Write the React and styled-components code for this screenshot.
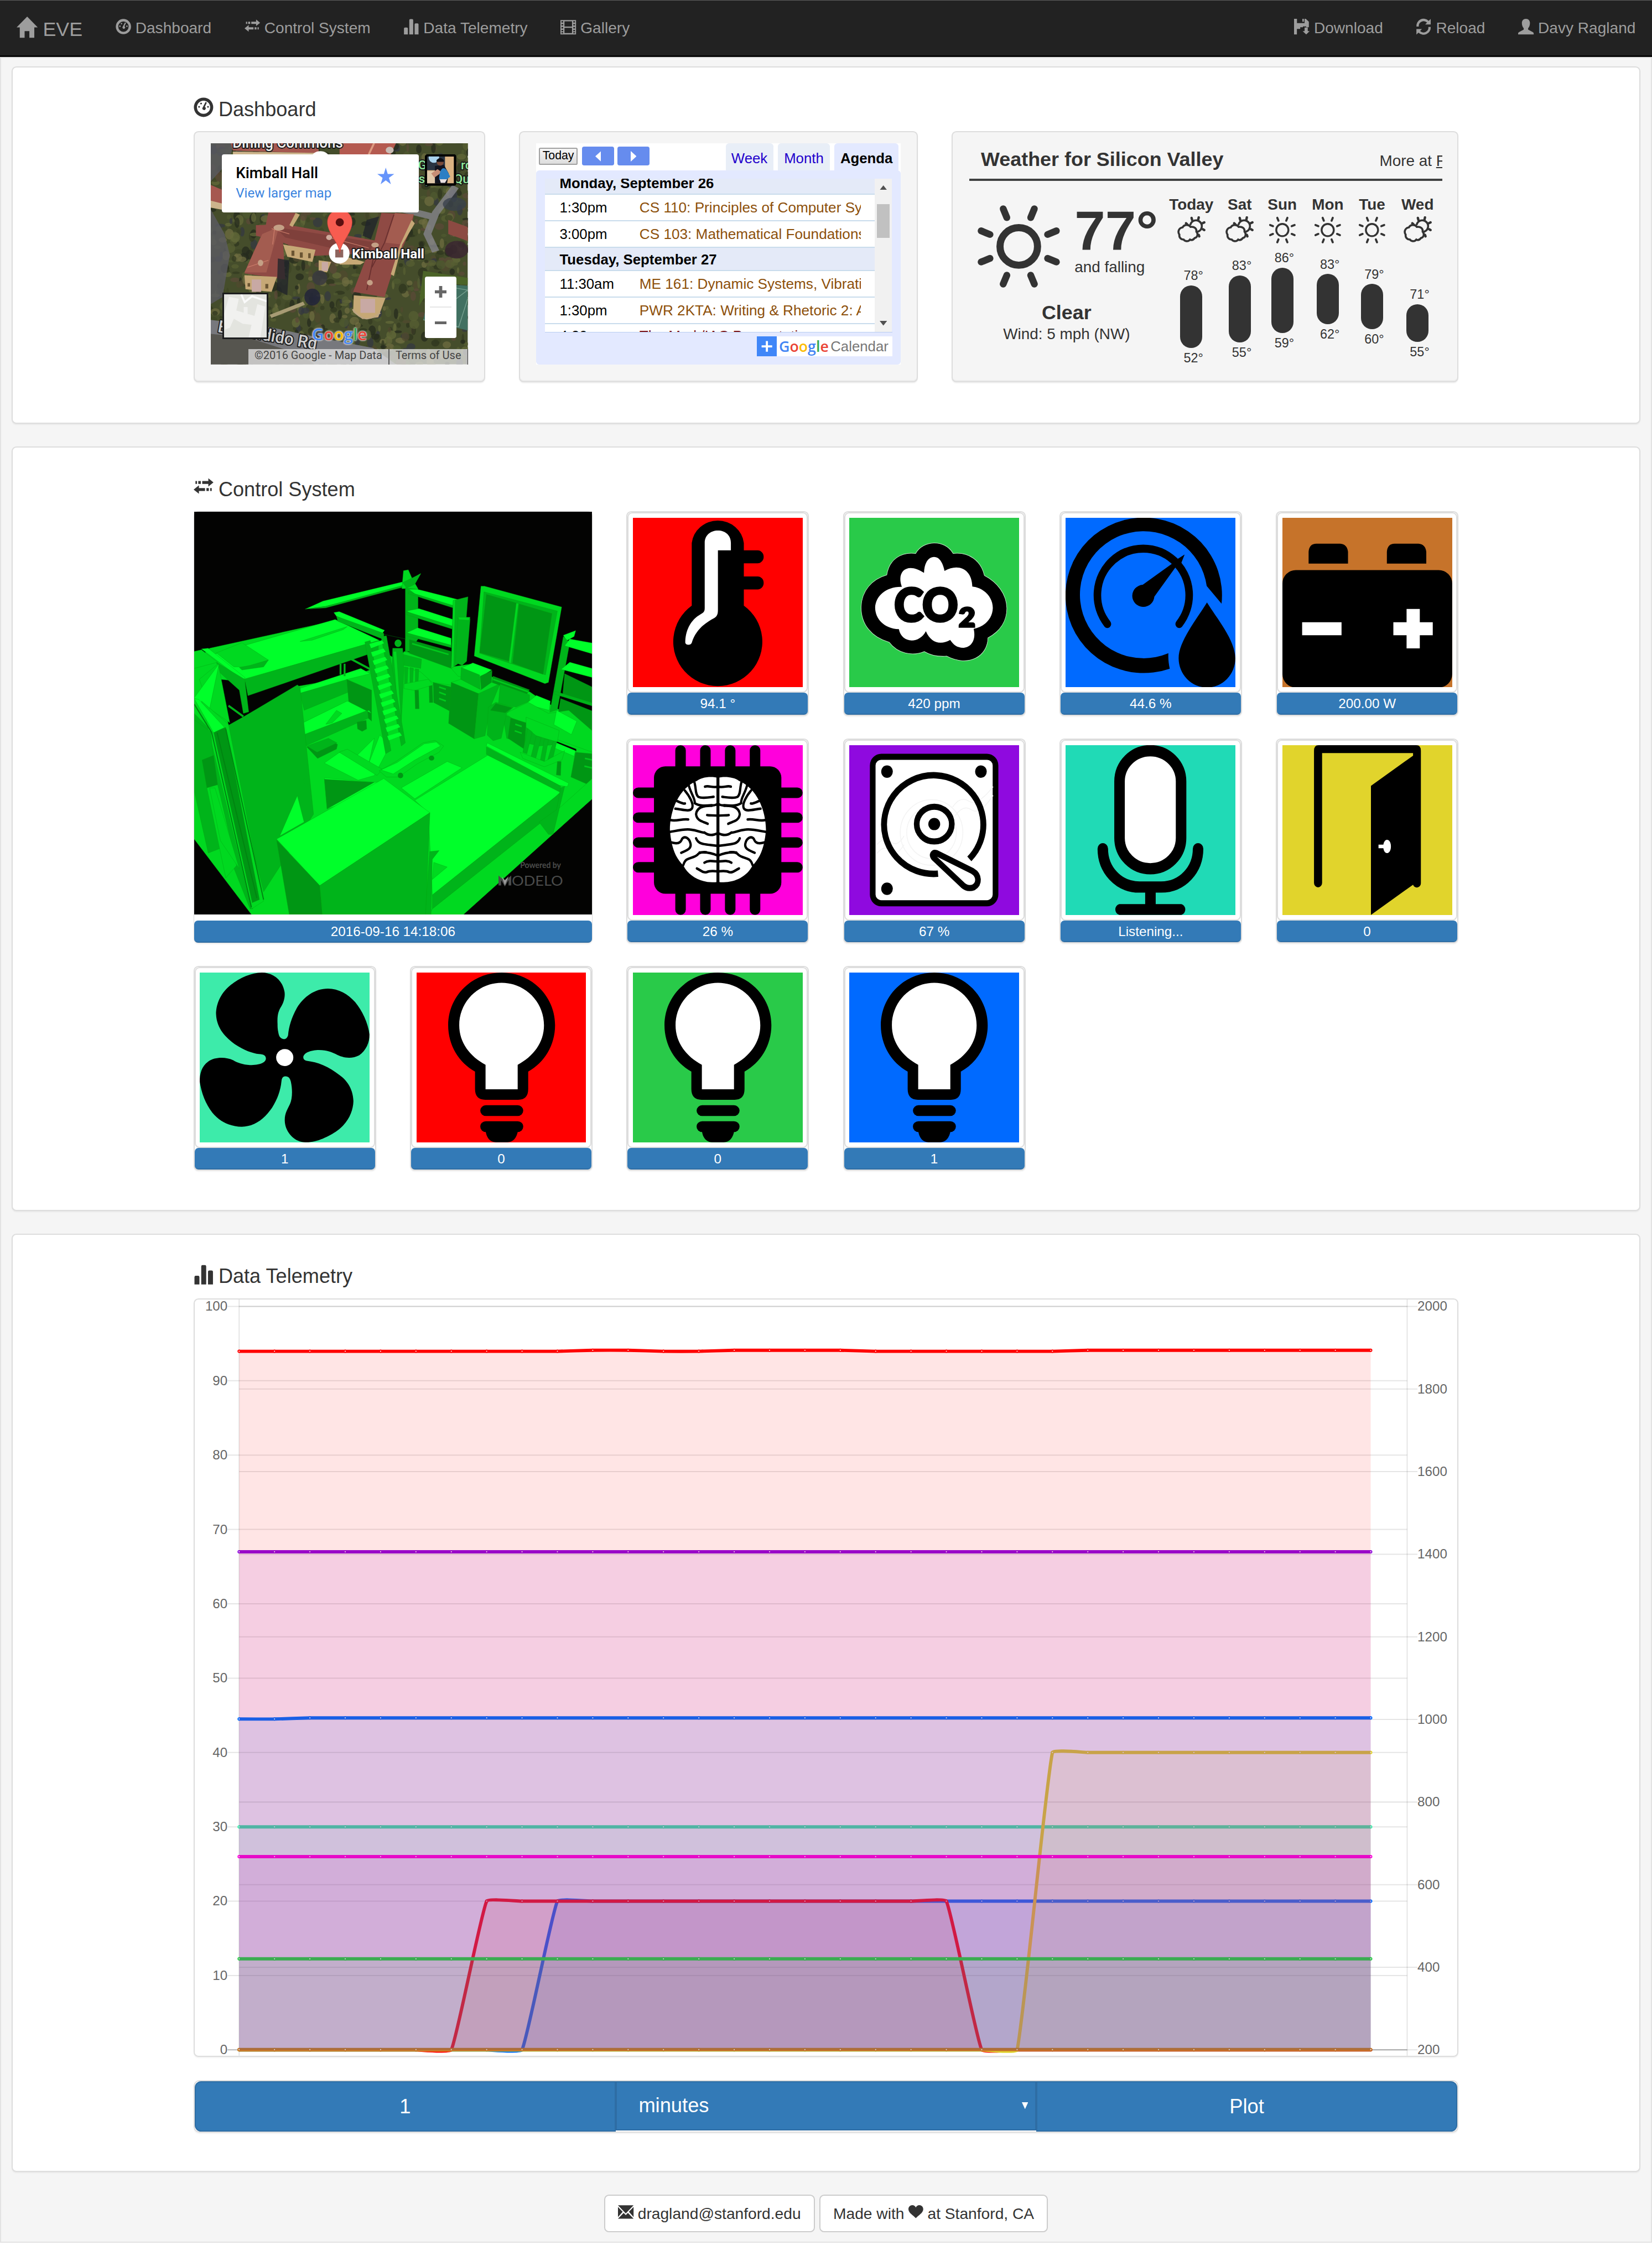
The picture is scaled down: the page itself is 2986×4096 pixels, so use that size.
import React from 'react';
import styled, { createGlobalStyle } from 'styled-components';

const GlobalStyle = createGlobalStyle`
  html, body { margin: 0; padding: 0; background: #fff; }
  *, *::before, *::after { box-sizing: border-box; }
  body { font-family: "Liberation Sans", Arial, sans-serif; color: #333; overflow: hidden; }
  svg { display: block; }
`;

const Page = styled.div`
  width: 3125px;
  height: 4286px;
  zoom: 0.95552;
  background: #fff;
`;

/* ---------- navigation ---------- */

const Navbar = styled.nav`
  display: flex;
  justify-content: space-between;
  height: 108px;
  padding: 0 31px;
  background: #222;
  border-top: 1.1px solid #5f5f5f;
  border-bottom: 3.2px solid #080808;
  color: #9d9d9d;
`;

const NavGroup = styled.div`
  display: flex;
  gap: 62.5px;
`;

const NavItem = styled.a`
  display: flex;
  align-items: center;
  gap: 8.1px;
  height: 104px;
  font-size: 29.4px;
  white-space: nowrap;
  > svg { margin-bottom: 5.5px; }
`;

const Brand = styled(NavItem)`
  padding-top: 5.5px;
  gap: 10px;
  font-size: 37.5px;
  > svg { margin-bottom: 9px; }
`;

/* ---------- panels ---------- */

const Body = styled.main`
  height: 4135px;
  padding: 16px 20px 0 20px;
  background: #f5f5f5;
  border: 2.1px solid #e3e3e3;
`;

const Panel = styled.section`
  height: ${(p) => p.$height}px;
  margin-bottom: 43px;
  padding-top: 56px;
  background: #fff;
  border: 2.1px solid #ddd;
  border-radius: 9px;
  box-shadow: 0 2px 2px rgba(0, 0, 0, 0.05);
`;

const Container = styled.div`
  width: 2393px;
  margin: 0 auto;
`;

const Heading = styled.h4`
  display: flex;
  align-items: center;
  gap: 9.8px;
  margin: 0 0 19.5px;
  font-size: 37.8px;
  line-height: 43px;
  font-weight: 400;
  > svg { margin-bottom: 7px; }
`;

const Wells = styled.div`
  display: flex;
  justify-content: space-between;
`;

const Well = styled.div`
  width: ${(p) => p.$width}px;
  height: 475.5px;
  padding: ${(p) => p.$pad || '21px 31px'};
  background: #f5f5f5;
  border: 2.1px solid #ddd;
  border-radius: 9px;
  box-shadow: inset 0 -2px 0 #ececec, 0 2px 2px rgba(0, 0, 0, 0.05);
`;

/* ---------- map ---------- */

const MapFrame = styled.div`
  position: relative;
  width: 486px;
  height: 418px;
  overflow: hidden;
  font-family: Roboto, sans-serif;
`;

const MapCard = styled.div`
  position: absolute;
  left: 21px;
  top: 21px;
  display: flex;
  justify-content: space-between;
  width: 372px;
  height: 110px;
  padding: 18px 46px 0 26px;
  background: #fff;
  border-radius: 4px;
`;

const PlaceName = styled.div`
  font-size: 29px;
  line-height: 36px;
  font-weight: 500;
  color: #000;
`;

const PlaceLink = styled.div`
  font-size: 25.2px;
  line-height: 38px;
  color: #3a84df;
`;

const Star = styled.svg`
  margin-top: 7px;
`;

const Avatar = styled.svg`
  position: absolute;
  left: 405px;
  top: 21px;
  border-radius: 5px;
`;

const ZoomControl = styled.div`
  position: absolute;
  left: 405px;
  top: 252px;
  display: flex;
  flex-direction: column;
  align-items: center;
  width: 59px;
  height: 116px;
  padding: 0 9px;
  background: #fff;
  border-radius: 4px;
`;

const ZoomKey = styled.div`
  display: flex;
  align-items: center;
  justify-content: center;
  width: 40px;
  flex: 1;
  & + & { border-top: 2.1px solid #e6e6e6; }
`;

const MiniMap = styled.svg`
  position: absolute;
  left: 22px;
  top: 282px;
  border: 3.2px solid #1c1d1e;
`;

const Logo = styled.div`
  font-family: "Open Sans", sans-serif;
  font-weight: 600;
  font-size: ${(p) => p.$size}px;
  line-height: 1;
  white-space: nowrap;
`;

const MapLogo = styled(Logo)`
  position: absolute;
  left: 191px;
  top: 345px;
  text-shadow: 0 0 3px #ddd, 0 0 3px #ddd, 0 0 3px #ddd;
`;

const Tint = styled.span`
  color: ${(p) => p.$c};
`;

const MapCredits = styled.div`
  position: absolute;
  left: 71px;
  bottom: 0;
  display: flex;
  width: 415px;
  height: 29px;
  font-size: 21px;
  line-height: 24px;
  color: #444;
  background: rgba(225, 225, 225, 0.78);
  border-right: 1.1px solid #333;
`;

const Credit = styled.span`
  width: ${(p) => p.$w}px;
  text-align: center;
  white-space: nowrap;
  & + & { border-left: 2.1px solid #555; }
`;

/* ---------- calendar ---------- */

const Calendar = styled.div`
  width: 689px;
  height: 418px;
  background: #fff;
  font-size: 27px;
  color: #000;
`;

const CalendarBar = styled.div`
  display: flex;
  justify-content: space-between;
  height: 51px;
  padding: 0 4px 0 5px;
`;

const CalendarKeys = styled.div`
  display: flex;
  padding-top: 6px;
`;

const TodayKey = styled.div`
  width: 73px;
  height: 33px;
  margin: 2px 8px 0 0;
  border: 2.1px solid #a0a0a0;
  border-radius: 3px;
  background: linear-gradient(#f6f6f6, #ddd);
  font-size: 22.3px;
  line-height: 26px;
  text-align: center;
`;

const ArrowKey = styled.div`
  display: flex;
  align-items: center;
  justify-content: center;
  width: 61px;
  height: 36px;
  margin-right: 6px;
  border-radius: 4px;
  background: #668cee;
`;

const Tabs = styled.div`
  display: flex;
  gap: 9px;
`;

const Tab = styled.div`
  width: ${(p) => p.$w}px;
  padding-top: 13px;
  border-radius: 6px 6px 0 0;
  background: ${(p) => (p.$active ? '#e3e9ff' : '#e8eef7')};
  color: ${(p) => (p.$active ? '#000' : '#20c')};
  font-weight: ${(p) => (p.$active ? 700 : 400)};
  line-height: 31px;
  text-align: center;
`;

const CalendarBody = styled.div`
  height: 367px;
  padding: 16px 16px 0;
  background: #e3e9ff;
  border-radius: 6px;
`;

const AgendaBox = styled.div`
  display: flex;
  height: 291px;
  overflow: hidden;
  border-bottom: 1.1px solid #b8cdf0;
`;

const AgendaList = styled.div`
  width: 624px;
  background: #fff;
`;

const DayHead = styled.div`
  height: ${(p) => p.$h}px;
  padding-left: 28px;
  border-bottom: 2.1px solid #c9dcec;
  background: #e4eaf8;
  font-weight: 700;
  line-height: ${(p) => p.$lh}px;
  overflow: hidden;
`;

const EventRow = styled.div`
  display: flex;
  height: 50px;
  padding: 0 26px 0 28px;
  border-bottom: 2.1px solid #c9dcec;
  line-height: ${(p) => p.$lh || 49}px;
  white-space: nowrap;
`;

const EventTime = styled.div`
  width: 151px;
  flex: none;
`;

const EventName = styled.div`
  flex: 1;
  overflow: hidden;
  font-size: 27.4px;
  color: ${(p) => p.$c || '#8d500b'};
`;

const ScrollTrack = styled.div`
  display: flex;
  flex-direction: column;
  align-items: center;
  justify-content: space-between;
  width: 32px;
  padding: 12px 0;
  background: #f1f1f1;
`;

const ScrollThumb = styled.div`
  width: 24px;
  height: 64px;
  margin: -130px 0 0 0;
  background: #c1c1c1;
`;

const CalendarBadge = styled.div`
  display: flex;
  align-items: center;
  width: 256px;
  height: 38px;
  margin: 7px 0 0 auto;
  background: #fff;
  color: #777;
`;

const BadgePlus = styled.svg`
  margin-right: 4px;
  background: #3f86f8;
`;

const BadgeWord = styled.span`
  margin-left: auto;
  padding-right: 7px;
`;

/* ---------- weather ---------- */

const Weather = styled.div`
  width: 895px;
  overflow: hidden;
`;

const WeatherTop = styled.div`
  display: flex;
  align-items: baseline;
  justify-content: space-between;
  height: 71px;
  padding: 9.5px 0 0 22px;
  border-bottom: 4.3px solid #3f4040;
`;

const WeatherTitle = styled.div`
  font-size: 37.6px;
  line-height: 42px;
  font-weight: 700;
  white-space: nowrap;
`;

const WeatherMore = styled.div`
  width: 119px;
  overflow: hidden;
  font-size: 29.2px;
  line-height: 40px;
  white-space: nowrap;
`;

const WeatherMain = styled.div`
  display: flex;
`;

const NowBlock = styled.div`
  width: 364px;
  padding-top: 44px;
`;

const NowRow = styled.div`
  display: flex;
  padding-left: 14px;
  gap: 25px;
`;

const NowTemp = styled.div`
  padding-top: 11px;
  font-size: 104.5px;
  line-height: 80px;
  font-weight: 700;
`;

const NowTrend = styled.div`
  margin-top: 8px;
  font-size: 29.2px;
  line-height: 40px;
  white-space: nowrap;
`;

const NowSky = styled.div`
  margin-top: 24px;
  padding-left: 4px;
  font-size: 37.5px;
  line-height: 42px;
  font-weight: 700;
  text-align: center;
`;

const NowWind = styled.div`
  margin-top: 2px;
  padding-left: 4px;
  font-size: 29.2px;
  line-height: 36px;
  text-align: center;
`;

const Days = styled.div`
  display: flex;
  padding-top: 27px;
`;

const Day = styled.div`
  display: flex;
  flex-direction: column;
  align-items: center;
  width: ${(p) => p.$w}px;
`;

const DayName = styled.div`
  font-size: 29.2px;
  line-height: 36px;
  font-weight: 700;
  margin-bottom: 4px;
`;

const DayTemp = styled.div`
  padding-left: 8px;
  margin-top: ${(p) => p.$gap || 0}px;
  font-size: 24.5px;
  line-height: 36px;
`;

const DayBar = styled.div`
  width: 42px;
  height: ${(p) => p.$h}px;
  margin-bottom: 1px;
  border-radius: 21px;
  background: #333;
`;

/* ---------- control tiles ---------- */

const Tiles = styled.div`
  display: grid;
  grid-template-columns: repeat(6, 345.5px);
  grid-auto-rows: 387px;
  column-gap: 64px;
  row-gap: 43.3px;
`;

const Tile = styled.div`
  border: 2.1px solid #ddd;
  border-radius: 9px;
  background: #fff;
  box-shadow: 0 2px 2px rgba(0, 0, 0, 0.05);
`;

const Thumb = styled.div`
  height: 341.5px;
  padding: 8px;
  border: 2.1px solid #ddd;
  border-radius: 9px;
  > svg { width: 100%; height: 321px; }
`;

const Readout = styled.div`
  height: 41.5px;
  border-radius: 7px;
  border-bottom: 2.1px solid #2e6da4;
  background: #337ab7;
  color: #fff;
  font-size: 25.4px;
  line-height: 41px;
  text-align: center;
`;

const CameraTile = styled(Tile)`
  grid-column: span 2;
  grid-row: span 2;
  display: flex;
  flex-direction: column;
  justify-content: space-between;
  border-width: 1.1px;
  > svg { width: 100%; height: 762px; }
`;

/* ---------- telemetry ---------- */

const ChartFrame = styled.div`
  height: 1434.5px;
  border: 2.1px solid #ddd;
  border-radius: 9px;
  box-shadow: 0 2px 2px rgba(0, 0, 0, 0.05);
`;

const PlotBar = styled.div`
  display: flex;
  align-items: flex-start;
  height: 99.5px;
  margin-top: 44px;
  border: 2.1px solid #ddd;
  border-radius: 11px;
  box-shadow: 0 2px 2px rgba(0, 0, 0, 0.05);
`;

const PlotKey = styled.div`
  width: 797px;
  height: 96px;
  border: 2.1px solid #2e6da4;
  border-radius: ${(p) => p.$radius};
  background: #337ab7;
  color: #fff;
  font-size: 38px;
  line-height: 93px;
  text-align: center;
`;

const PlotSelect = styled.div`
  display: flex;
  align-items: center;
  justify-content: space-between;
  width: 795px;
  height: 94px;
  padding: 0 13px 1px 41px;
  border: 2.1px solid #2e6da4;
  background: #337ab7;
  color: #fff;
  font-size: 38px;
`;

const Footer = styled.footer`
  display: flex;
  justify-content: center;
  gap: 9px;
`;

const FooterButton = styled.a`
  display: flex;
  align-items: center;
  gap: 8px;
  height: 71px;
  padding: 0 24px;
  border: 2.1px solid #ccc;
  border-radius: 9px;
  background: #fff;
  font-size: 29.5px;
  > svg { margin-bottom: 6px; }
`;

/* ---------- glyphs ---------- */

const GLYPHS = {
  home: <path d="M12 0 0 12.3h3.6V24h5.5v-7.5h5.4V24h5.6V12.3H24Z" />,
  dashboard: (
    <g>
      <path fillRule="evenodd" d="M12 .3a11.7 11.7 0 1 0 0 23.4A11.7 11.7 0 0 0 12 .3Zm0 3.7a8 8 0 1 1 0 16 8 8 0 0 1 0-16Z" />
      <circle cx="6.6" cy="11.4" r="1.1" /><circle cx="9" cy="7.4" r="1.1" /><circle cx="17.4" cy="11.4" r="1.1" />
      <path d="M14.4 5.6 16 6.3 13.5 11.5a2 2 0 1 1-2.4.5Z" />
    </g>
  ),
  transfer: (
    <g>
      <path d="M10.4 4.4h7.4V1L24 6.1l-6.2 5V7.8h-7.4ZM5.6 4.4h3.1v3.4H5.6ZM2.2 4.4h1.9v3.4H2.2Z" />
      <path d="M13.8 12.9H6.4V9.6L0 14.7l6.4 5v-3.3h7.4ZM15.5 12.9h2.9v3.5h-2.9ZM20 12.9h1.9v3.5H20Z" />
    </g>
  ),
  stats: <path d="M1 24V15a1.6 1.6 0 0 1 1.6-1.6h2.8A1.6 1.6 0 0 1 7 15v9ZM9.2 24V2.1A1.6 1.6 0 0 1 10.8.5h2.8a1.6 1.6 0 0 1 1.6 1.6V24ZM17.4 24V8.6A1.6 1.6 0 0 1 19 7h2.8a1.6 1.6 0 0 1 1.6 1.6V24Z" />,
  film: <path fillRule="evenodd" d="M0 2h24v22H0ZM1.6 3.6v2.2h2.6V3.6Zm0 4.5v2.2h2.6V8.1Zm0 4.5v2.2h2.6v-2.2Zm0 4.4v2.2h2.6V17Zm0 3.7v1.7h2.6v-1.7Zm18.2-17.1v2.2h2.6V3.6Zm0 4.5v2.2h2.6V8.1Zm0 4.5v2.2h2.6v-2.2Zm0 4.4v2.2h2.6V17Zm0 3.7v1.7h2.6v-1.7ZM6.2 3.9v8h11.6v-8Zm0 10v8h11.6v-8Z" />,
  save: <path fillRule="evenodd" d="M0 0h4.5v6.6h11.7V0H18l4.8 4.500V13h-4.100v-1.300h-5V13H9.500v2.600H4.400V24H0ZM12.800 0h2.300v4.400h-2.300ZM16.200 13.400h4.900v5.500H24L18.700 24l-5.500-5.100h3Z" />,
  refresh: (
    <g>
      <path d="M1 12A11 11 0 0 1 19.8 3.200L23 .2v8.600H14.500l2.900-3A7.600 7.600 0 0 0 4.600 12Z" />
      <path d="M23 12.500A11 11 0 0 1 4.200 21.200L1 24.200v-8.400H9.500l-2.900 3a7.600 7.600 0 0 0 12.800-6.300Z" />
    </g>
  ),
  user: <path d="M12 0c3.7 0 6.2 2.5 6.2 6.6 0 3.3-1.1 6-2.8 7.9v2.2L22.5 20.5c1 .6 1.5 1.3 1.5 2.5v1H0v-1c0-1.2.5-1.9 1.5-2.5l7.1-3.8v-2.2C6.9 12.6 5.8 9.9 5.8 6.6 5.8 2.5 8.3 0 12 0Z" />,
  envelope: <path d="M0 2h24L12 14.500ZM0 4.500 7.200 12 0 20ZM24 4.500 16.800 12 24 20ZM8.700 13.600 12 17l3.300-3.400L24 22.500H0Z" />,
  heart: <path d="M12 22C8 17.500 0 13.500 0 7.600 0 3.600 3 1 6.300 1 9 1 11 2.600 12 4.800 13 2.600 15 1 17.700 1 21 1 24 3.600 24 7.600 24 13.500 16 17.500 12 22Z" />,
};

const Glyph = ({ name, size }) => (
  <svg width={size} height={size} viewBox="0 0 24 24" fill="currentColor" overflow="visible">{GLYPHS[name]}</svg>
);

const GoogleWord = () => (
  <>
    <Tint $c="#4285f4">G</Tint><Tint $c="#ea4335">o</Tint><Tint $c="#fbbc05">o</Tint>
    <Tint $c="#4285f4">g</Tint><Tint $c="#34a853">l</Tint><Tint $c="#ea4335">e</Tint>
  </>
);

/* ---------- satellite imagery ---------- */

const makeRandom = (seed) => {
  let s = seed;
  return () => {
    s = (s * 16807) % 2147483647;
    return s / 2147483647;
  };
};

const rand = makeRandom(41);
const LEAF = ['#2f351f', '#4f5930', '#262b1e', '#636a3a', '#3d4526', '#50492f', '#343842', '#6e6c40', '#343b22', '#575f33', '#5b4a38'];
const TREES = Array.from({ length: 1100 }, () => ({
  x: 110 + rand() * 1260,
  y: 110 + rand() * 1290,
  rx: 6 + rand() * 18,
  ry: 7 + rand() * 24,
  c: LEAF[Math.floor(rand() * LEAF.length)],
}));
const ROOF = ['#8f4a44', '#a35c50', '#7f403b'];

const Satellite = () => (
  <svg width="486" height="418" viewBox="0 0 486 418">
    <g transform="scale(0.39542 0.33175) translate(-124 -123)">
      <rect x="124" y="123" width="1229" height="1260" fill="#454d2b" />
      {TREES.map((t, i) => <ellipse key={i} cx={t.x} cy={t.y} rx={t.rx} ry={t.ry} fill={t.c} opacity=".75" />)}
      <path d="M124 123H240L200 240 124 340ZM124 500 190 640 215 760 180 1000 124 1040Z" fill="#5b5b63" opacity=".8" />
      <path d="M1295 370 1200 520 1160 640 1200 740M1010 490 1180 540" stroke="#85858c" strokeWidth="36" fill="none" opacity=".8" />
      <path d="M124 1130 400 1170 640 1230 900 1290 1010 1383H124Z" fill="#77787d" />
      <path d="M124 1210 300 1230 560 1330 620 1383H124Z" fill="#56554f" />
      <path d="M410 1110 570 1035" stroke="#a79b74" strokeWidth="20" />
      <path d="M1180 920 1353 935V1190L1140 1130Z" fill="#417061" />
      <path d="M1180 925 1353 960M1210 1090 1353 960M1140 1130 1310 1170 1353 1010" stroke="#8db3a2" strokeWidth="4" fill="none" opacity=".7" />
      <path d="M1140 850 1353 890V930L1190 925 1120 1050Z" fill="#4c6428" />
      <path d="M230 165 640 180V123H220ZM124 360 200 400 210 500 124 450Z" fill="#a65850" />
      <path d="M740 123H1010L985 186H740Z" fill="#b45a50" />
      <path d="M905 123 880 186" stroke="#dc9a80" strokeWidth="10" />
      <path d="M124 450 190 470V505L124 490ZM230 170 640 178V186H230Z" fill="#ccb48c" />
      <path d="M400 515 530 520 505 600 470 690 480 900 430 890 285 865 330 740 385 600Z" fill={ROOF[0]} />
      <path d="M340 590 480 585 920 680 900 750 620 765 470 690 340 650Z" fill={ROOF[0]} />
      <path d="M430 600 920 690 900 740 700 720 480 660Z" fill={ROOF[2]} />
      <path d="M450 600 390 860 285 860 370 640Z" fill={ROOF[1]} />
      <path d="M940 520 1095 528 1085 600 1000 830 955 1000 805 970 860 800 905 690Z" fill={ROOF[0]} />
      <path d="M1005 520 1095 528 1040 700 960 690Z" fill={ROOF[1]} />
      <path d="M905 760 870 960M1000 530 955 690 895 830" stroke="#6a302f" strokeWidth="5" fill="none" />
      <path d="M415 610 500 640M430 600 420 700M690 660 880 720M300 830 400 790" stroke="#c77967" strokeWidth="4" fill="none" />
      <path d="M285 875 440 885 415 970 290 955ZM470 700 625 730 610 800 490 770ZM808 990 960 1005 925 1115 850 1125 805 1085ZM640 790 700 800 680 860 640 850ZM740 760 860 800 840 815 740 815ZM1085 560 1100 580 1040 700 1000 880 985 870 1030 700ZM530 520 550 530 515 600 500 590Z" fill="#c6a876" />
      <path d="M320 900h45v70h-45ZM840 1010h70v80h-70ZM655 800h30v50h-30Z" fill="#c8a9a4" />
      <path d="M300 920h12v20h-12ZM385 925h14v26h-14ZM510 735h14v30h-14ZM550 745h14v30h-14ZM590 750h12v28h-12Z" fill="#6b5533" />
      <path d="M802 1070Q860 1165 935 1090" fill="none" stroke="#bda584" strokeWidth="7" />
      <ellipse cx="450" cy="604" rx="26" ry="17" fill="#c4a086" />
      <ellipse cx="690" cy="660" rx="14" ry="15" fill="#d0ab9c" />
      <ellipse cx="885" cy="918" rx="14" ry="16" fill="#c4a086" />
      <ellipse cx="910" cy="703" rx="18" ry="14" fill="#c4a086" />
      <ellipse cx="362" cy="805" rx="13" ry="18" fill="#c4a086" />
      <path d="M1260 560 1353 600V680L1260 640Z" fill="#8c4a42" />
      <path d="M445 780 500 790 490 990 440 960ZM870 560 930 540 890 670 850 650Z" fill="#20242a" opacity=".8" />
      <ellipse cx="610" cy="1000" rx="38" ry="48" fill="#22243a" opacity=".85" />
      <ellipse cx="645" cy="890" rx="36" ry="42" fill="#3a3a40" opacity=".85" />
      <ellipse cx="1300" cy="730" rx="55" ry="50" fill="#3a2630" opacity=".85" />
      <ellipse cx="1290" cy="470" rx="56" ry="38" fill="#39414c" opacity=".8" />
      <ellipse cx="980" cy="162" rx="19" ry="19" fill="#c9bcb5" />
      <ellipse cx="648" cy="205" rx="42" ry="37" fill="#fff" />
      <rect x="1345" y="1300" width="8" height="83" fill="#333" />
    </g>
    <g fontFamily="Roboto, sans-serif" fontWeight="500" stroke="#1a1a1a" strokeWidth="4" paintOrder="stroke" strokeLinejoin="round">
      <text x="41" y="8.5" fontSize="29" fill="#eee" textLength="209" lengthAdjust="spacingAndGlyphs">Dining Commons</text>
      <g fill="#8fe89a" fontSize="24">
        <text x="392" y="49">G</text><text x="473" y="49">rd</text>
        <text x="393" y="75">sp</text><text x="460" y="75">Qu</text>
      </g>
      <text transform="translate(12 357) rotate(10)" fontSize="32" fill="#cfcfcf" textLength="190" lengthAdjust="spacingAndGlyphs">Escondido Rd</text>
      <circle cx="243" cy="208" r="19.5" fill="#fff" stroke="none" />
      <rect x="235.5" y="201" width="15" height="15" fill="#8e655e" stroke="none" />
      <path d="M244 207C243 188 221 170 221 149a22.8 22.8 0 0 1 46 0C267 170 245 188 244 207Z" fill="#f75c50" stroke="#c8453a" strokeWidth="1.5" />
      <circle cx="244" cy="149.5" r="7.7" fill="#5b0f10" stroke="none" />
      <text x="267" y="218" fontSize="25" fontWeight="700" fill="#fff" textLength="137" lengthAdjust="spacingAndGlyphs">Kimball Hall</text>
    </g>
  </svg>
);

const MapWidget = () => (
  <MapFrame>
    <Satellite />
    <MapCard>
      <div>
        <PlaceName>Kimball Hall</PlaceName>
        <PlaceLink>View larger map</PlaceLink>
      </div>
      <Star width="32" height="32" viewBox="0 0 32 32">
        <path d="M16 0 19.7 12H32L22 19.5 25.7 31.5 16 24.2 6.3 31.5 10 19.5 0 12H12.3Z" fill="#6694fb" />
      </Star>
    </MapCard>
    <Avatar width="59" height="59" viewBox="0 0 59 59">
      <rect width="59" height="59" fill="#000" />
      <rect x="4" y="4" width="51" height="51" fill="#dcb383" />
      <path d="M4 4H38V30H4Z" fill="#2a3442" />
      <circle cx="17" cy="6" r="10" fill="#a9d3ee" />
      <path d="M4 32H20V55H4Z" fill="#e0c9ab" />
      <path d="M19 22 36 20 45 36 42 55H19Z" fill="#12141f" />
      <circle cx="29" cy="15" r="6.5" fill="#7a4b3a" />
      <path d="M22 11Q29 3 36 11V14H22Z" fill="#0c0d14" />
      <path d="M12 36 24 28 32 34 18 44Z" fill="#c58d75" />
      <path d="M27 44C28 30 33 24 38 27S44 36 48 42L38 50 27 48Z" fill="#2b7fc4" />
      <path d="M28 47H42L38 54H30Z" fill="#e8dfe0" />
      <path d="M0 0H59V4H0ZM0 0H4V59H0ZM55 0H59V59H55ZM0 55H59V59H0Z" fill="#000" />
    </Avatar>
    <MiniMap width="87" height="88" viewBox="0 0 87 88">
      <rect width="87" height="88" fill="#e3e4df" />
      <path d="M10 5 30 9 25 33 62 44 68 20 84 25 74 88H50L56 62 38 60 20 50 12 68 2 72 0 40ZM40 26h8v14h-8Z" fill="#f1f1ef" />
      <path d="M35 0 42 16 57 4 87 14" fill="none" stroke="#fafafa" strokeWidth="4" />
    </MiniMap>
    <ZoomControl>
      <ZoomKey><svg width="22" height="22" viewBox="0 0 22 22"><path d="M8 0h6v8h8v6h-8v8H8v-8H0V8h8Z" fill="#666" /></svg></ZoomKey>
      <ZoomKey><svg width="22" height="6" viewBox="0 0 22 6"><rect width="22" height="6" fill="#666" /></svg></ZoomKey>
    </ZoomControl>
    <MapLogo $size={31}><GoogleWord /></MapLogo>
    <MapCredits>
      <Credit $w={265}>©2016 Google - Map Data</Credit>
      <Credit $w={150}>Terms of Use</Credit>
    </MapCredits>
  </MapFrame>
);

/* ---------- calendar widget ---------- */

const Event = ({ time, name, color, lh }) => (
  <EventRow $lh={lh}>
    <EventTime>{time}</EventTime>
    <EventName $c={color}>{name}</EventName>
  </EventRow>
);

const CalendarWidget = () => (
  <Calendar>
    <CalendarBar>
      <CalendarKeys>
        <TodayKey>Today</TodayKey>
        <ArrowKey><svg width="11" height="20" viewBox="0 0 11 20"><path d="M11 0V20L0 10Z" fill="#fff" /></svg></ArrowKey>
        <ArrowKey><svg width="11" height="20" viewBox="0 0 11 20"><path d="M0 0V20L11 10Z" fill="#fff" /></svg></ArrowKey>
      </CalendarKeys>
      <Tabs>
        <Tab $w={90}>Week</Tab>
        <Tab $w={98}>Month</Tab>
        <Tab $w={121} $active>Agenda</Tab>
      </Tabs>
    </CalendarBar>
    <CalendarBody>
      <AgendaBox>
        <AgendaList>
          <DayHead $h={30.5} $lh={17}>Monday, September 26</DayHead>
          <Event time="1:30pm" name="CS 110: Principles of Computer Systems" />
          <Event time="3:00pm" name="CS 103: Mathematical Foundations of Computing" />
          <DayHead $h={44.5} $lh={45}>Tuesday, September 27</DayHead>
          <Event time="11:30am" name="ME 161: Dynamic Systems, Vibrations" />
          <Event time="1:30pm" name="PWR 2KTA: Writing & Rhetoric 2: Advanced" />
          <Event time="4:30pm" name="The Mark/IAC Presentation" color="#7a1014" lh={46} />
        </AgendaList>
        <ScrollTrack>
          <svg width="14" height="9" viewBox="0 0 14 9"><path d="M7 0 14 9H0Z" fill="#505050" /></svg>
          <ScrollThumb />
          <svg width="14" height="9" viewBox="0 0 14 9"><path d="M7 9 14 0H0Z" fill="#505050" /></svg>
        </ScrollTrack>
      </AgendaBox>
      <CalendarBadge>
        <BadgePlus width="38" height="38" viewBox="0 0 38 38"><path d="M19 9V29M9 19H29" stroke="#fff" strokeWidth="4" /></BadgePlus>
        <Logo $size={28}><GoogleWord /></Logo>
        <BadgeWord>Calendar</BadgeWord>
      </CalendarBadge>
    </CalendarBody>
  </Calendar>
);

/* ---------- weather widget ---------- */

const SunIcon = ({ size, ring, ray }) => (
  <svg width={size} height={size} viewBox="0 0 160 160" fill="none" stroke="#333" strokeLinecap="round">
    <circle cx="80" cy="80" r="35.5" strokeWidth={ring} />
    {[0, 1, 2, 3, 4, 5, 6, 7].map((i) => (
      <path key={i} d="M80 21V3" strokeWidth={ray} transform={`rotate(${22.5 + i * 45} 80 80)`} />
    ))}
  </svg>
);

const CloudSunIcon = () => (
  <svg width="53" height="52" viewBox="0 0 53 52" fill="none" stroke="#333" strokeWidth="3.8" strokeLinecap="round">
    <path d="M25 15A11 11 0 1 1 39 29" />
    <path d="M27 3 28 7M40.5 2 39.5 6.500M48 13 51 11.500M48.500 24.500 51 26M40.500 35 41.500 38M16.500 13 18.500 15" strokeWidth="4.500" />
    <path d="M10 21C13 15 22 15 25 20C32 19 37 23 36 29C40 34 38 40 33 41C30 45 27 46 24 44C20 49 14 47 12 44C6 44 3 39 4 35C0 29 3 22 10 21Z" fill="#f5f5f5" />
  </svg>
);

const FORECAST = [
  { day: 'Today', w: 112, sky: 'cloud', high: 78, low: 52, gap: 36, bar: 119 },
  { day: 'Sat', w: 71, sky: 'cloud', high: 83, low: 55, gap: 17, bar: 127.5 },
  { day: 'Sun', w: 90, sky: 'sun', high: 86, low: 59, gap: 2.5, bar: 123.5 },
  { day: 'Mon', w: 82, sky: 'sun', high: 83, low: 62, gap: 14.5, bar: 95.5 },
  { day: 'Tue', w: 86, sky: 'sun', high: 79, low: 60, gap: 33.5, bar: 86 },
  { day: 'Wed', w: 86, sky: 'cloud', high: 71, low: 55, gap: 71.5, bar: 71.5 },
];

const WeatherWidget = () => (
  <Weather>
    <WeatherTop>
      <WeatherTitle>Weather for Silicon Valley</WeatherTitle>
      <WeatherMore>More at <u>Forecast.io</u></WeatherMore>
    </WeatherTop>
    <WeatherMain>
      <NowBlock>
        <NowRow>
          <SunIcon size={160} ring={13.5} ray={13} />
          <div>
            <NowTemp>77°</NowTemp>
            <NowTrend>and falling</NowTrend>
          </div>
        </NowRow>
        <NowSky>Clear</NowSky>
        <NowWind>Wind: 5 mph (NW)</NowWind>
      </NowBlock>
      <Days>
        {FORECAST.map((f) => (
          <Day key={f.day} $w={f.w}>
            <DayName>{f.day}</DayName>
            {f.sky === 'sun' ? <SunIcon size={52} ring={11} ray={12} /> : <CloudSunIcon />}
            <DayTemp $gap={f.gap + 6.5}>{f.high}°</DayTemp>
            <DayBar $h={f.bar} />
            <DayTemp>{f.low}°</DayTemp>
          </Day>
        ))}
      </Days>
    </WeatherMain>
  </Weather>
);

/* ---------- room model ---------- */

const G1 = '#00ff2a';
const G2 = '#00d920';
const G3 = '#00b41a';
const G4 = '#009614';
const BK = '#030302';

const ROOM = [
  [G2, '33,640 90,590 560,500 690,560 820,600 985,650 1065,640 1150,690 1275,730 1300,745 1507,850 1507,1075 1030,1448 245,1448 33,1205'],
  [BK, '130,690 240,700 690,605 700,655 600,685 420,712 160,838'],
  [BK, '735,545 815,560 815,600 770,620 735,600'],
  /* rocket */
  [G1, '444,464 510,438 805,376 803,392 520,455'],
  [G3, '460,463 520,455 803,388 803,394 520,460'],
  [G2, '808,340 826,337 840,365 872,349 850,380 862,398 860,412 818,398 802,398'],
  [G3, '805,378 872,350 850,384 820,396'],
  /* book shelf */
  [G3, '815,395 862,400 862,560 830,600 815,600'],
  [G1, '828,400 860,400 1010,433 992,458 862,422'],
  [G3, '826,408 992,452 992,460 826,414'],
  [G1, '820,470 865,462 995,498 988,524 860,492'],
  [G3, '820,472 988,518 988,528 820,482'],
  [G1, '820,540 860,524 985,558 985,582 860,553'],
  [G3, '820,540 985,580 985,588 820,550'],
  [G4, '830,562 985,600 985,655 830,610'],
  [G3, '992,436 1047,424 1040,500 1010,640 985,655'],
  [G2, '992,436 1000,434 994,650 985,655'],
  [G3, '1010,492 1055,494 1042,632 1025,645 1000,636'],
  [G2, '1010,490 1055,490 1050,500 1015,498'],
  /* window */
  [G2, '1095,390 1108,390 1394,457 1345,700 1332,704 1070,615'],
  [G3, '1106,408 1378,470 1334,676 1090,606'],
  [G4, '1115,416 1226,444 1200,632 1090,604'],
  [G4, '1236,447 1358,478 1325,674 1212,638'],
  [G2, '1226,444 1234,446 1206,640 1198,636'],
  /* right shelf */
  [G1, '1400,548 1446,533 1440,552 1412,566'],
  [G3, '1400,552 1424,572 1378,788 1350,796'],
  [G1, '1424,560 1507,573 1507,608 1405,582'],
  [G1, '1424,635 1507,655 1507,684 1392,658'],
  [G4, '1405,672 1507,715 1507,770 1398,738'],
  [G3, '1368,728 1507,766 1507,776 1368,738'],
  [G4, '1390,752 1507,792 1507,860 1380,806'],
  /* desks */
  [G2, '810,600 985,655 1010,680 1060,690 1010,712 915,700 870,665 800,650'],
  [G4, '918,700 985,715 985,795 920,765'],
  [G1, '1065,637 1135,660 1090,684 1022,654'],
  [G3, '1022,652 1090,676 1092,724 1020,690'],
  [G4, '1092,680 1136,662 1134,705 1096,724'],
  [G2, '985,700 1020,690 1095,724 1134,700 1166,708 1086,738'],
  [G4, '985,700 1086,736 1070,882 975,832'],
  [G3, '1086,736 1166,704 1130,780 1110,872 1070,882'],
  [G4, '1140,680 1275,724 1262,742 1136,700'],
  [G3, '1166,706 1275,740 1275,760 1225,780 1160,768'],
  [G1, '1300,742 1352,760 1348,790 1260,770'],
  [G2, '1186,800 1270,764 1345,800 1420,790 1507,856 1507,925 1380,885 1210,816'],
  [G3, '1175,800 1210,815 1345,860 1375,900 1310,905 1190,880'],
  [G4, '1205,815 1262,830 1255,915 1195,880'],
  [G3, '1122,780 1150,764 1215,780 1190,800 1170,880 1140,888 1118,870'],
  [G4, '1150,768 1210,782 1185,798 1130,790'],
  [G1, '1375,790 1450,825 1430,868 1365,836'],
  [G4, '1445,925 1507,930 1507,1035 1428,1005'],
  [BK, '1370,888 1448,915 1448,922 1375,895'],
  [G1, '1375,895 1445,920 1440,938 1350,905'],
  /* chairs */
  [G3, '808,610 875,625 872,655 810,645'],
  [G3, '812,650 825,652 822,705 812,705'],
  [G3, '832,652 845,654 842,705 832,705'],
  [G3, '852,656 865,658 862,705 852,705'],
  [G2, '810,705 900,690 918,708 850,726 810,720'],
  [G4, '850,725 864,725 866,785 852,785'],
  [G4, '903,712 915,710 917,765 904,765'],
  [G2, '1262,812 1385,855 1378,892 1300,872 1262,845'],
  [G3, '1268,848 1285,860 1265,930 1250,925'],
  [G3, '1300,872 1318,878 1298,945 1280,940'],
  [G3, '1330,882 1345,885 1330,955 1315,950'],
  [G3, '1362,890 1376,890 1360,950 1342,950'],
  [G2, '1240,925 1330,955 1405,920 1395,950 1330,972 1250,945'],
  [G4, '1378,955 1392,955 1390,1000 1374,998'],
  /* lamp post and board */
  [G3, '768,590 805,590 810,660 800,830 765,660'],
  [G2, '770,600 782,600 800,830 790,820'],
  /* loft bed */
  [G1, '555,497 720,565 215,690 95,612'],
  [G3, '220,690 715,565 715,598 232,743'],
  [G2, '425,568 600,520 585,530 470,564'],
  [G1, '550,475 570,472 738,532 730,542 712,545 560,487'],
  [G3, '560,487 735,542 735,562 565,503'],
  [G2, '115,605 210,572 308,628 232,650 180,650'],
  [G3, '200,652 240,645 308,628 290,650 210,660'],
  [G1, '60,592 85,590 222,685 212,692'],
  [G3, '115,635 220,690 235,795 215,800 200,725 130,670'],
  [G2, '33,600 60,595 120,635 33,655'],
  /* lower couch */
  [G3, '422,725 598,684 608,730 440,790'],
  [G1, '422,720 650,655 685,672 600,690 424,735'],
  [G4, '598,690 690,725 690,825 605,760'],
  [G1, '436,830 600,760 690,800 680,790 440,872'],
  [G2, '520,835 560,790 580,800 545,830'],
  [G3, '440,868 675,790 678,815 445,905'],
  [G4, '636,828 670,822 672,850 655,858 638,850'],
  [G4, '450,908 530,882 564,900 560,915 490,945'],
  [G3, '450,905 530,880 562,895 488,925'],
  [G1, '515,960 580,920 625,945 700,880 680,960 720,870 760,900 700,1000 640,1015'],
  [G2, '570,925 600,915 730,980 710,1000'],
  /* ladder */
  [G3, '665,570 685,565 762,920 742,930'],
  [G3, '725,552 745,550 815,895 800,905'],
  /* skateboard */
  [G2, '718,985 780,955 880,895 925,887 957,905 940,925 860,962 790,1005 745,1005'],
  [G1, '725,982 785,958 885,898 930,892 945,905 850,950 770,995'],
  [G1, '800,1040 970,955 1025,975 850,1075'],
  /* tall panels on the left */
  [G2, '52,690 122,640 165,830 90,785'],
  [G1, '33,750 125,640 90,785'],
  [G3, '160,840 415,708 425,715 475,1125 290,1375 220,1130'],
  [G3, '33,800 100,860 250,1430 240,1430 135,1200 33,1000'],
  [G2, '60,760 160,835 290,1405 245,1430'],
  [G4, '105,860 150,845 275,1400 248,1410'],
  [G3, '33,820 95,860 130,1235 85,1250 33,1050'],
  [G4, '62,950 105,935 120,1030 80,1040'],
  [G2, '80,1040 120,1030 190,1290 150,1330'],
  [G1, '33,752 105,862 145,845 50,755'],
  [G2, '130,1210 90,1040 110,1040 200,1300'],
  /* near bed */
  [G1, '515,1008 705,1022 740,1015 770,1035 525,1108'],
  [G4, '515,1012 700,1022 525,1108'],
  [G1, '850,1080 1120,935 1390,1052 1370,1070 915,1385 900,1120'],
  [G1, '1118,895 1420,1025 1415,1036 1385,1032 1115,905'],
  [G3, '1115,908 1390,1034 1388,1054 1115,932'],
  [G3, '915,1385 1390,1055 1385,1105 915,1430'],
  [G2, '905,1448 915,1430 1385,1105 1507,1010 1507,1075 1030,1448'],
  [G3, '1390,1040 1405,1035 1362,1190 1345,1190 1310,1150 1375,1110'],
  [G2, '920,1280 970,1295 915,1335'],
  [G3, '905,1245 940,1242 915,1270 910,1448 888,1448'],
  [G1, '415,1065 440,1150 350,1195'],
  /* wardrobe box */
  [G1, '338,1205 735,1010 906,1120 498,1355'],
  [G4, '338,1208 498,1355 508,1448 385,1448'],
  [G3, '498,1355 906,1120 890,1448 510,1448'],
];

const RUNGS = Array.from({ length: 12 }, (_, i) => i);

const RoomView = () => (
  <svg viewBox="0 0 752 762" preserveAspectRatio="none">
    <rect width="752" height="762" fill={BK} />
    <g transform="scale(0.5102 0.587) translate(-33 -150)">
      {ROOM.map(([fill, points], i) => <polygon key={i} points={points} fill={fill} stroke="#00a012" strokeWidth=".8" />)}
      {RUNGS.map((i) => (
        <path key={i} d={`M${682 + i * 6} ${576 + i * 27} ${728 + i * 6} ${564 + i * 27} ${736 + i * 6} ${574 + i * 27} ${688 + i * 6} ${590 + i * 27}Z`} fill={G1} />
      ))}
      <ellipse cx="788" cy="574" rx="13" ry="12" fill={G3} />
      <ellipse cx="448" cy="1018" rx="12" ry="10" fill={G3} />
      <ellipse cx="797" cy="1000" rx="10" ry="9" fill={G4} />
      <ellipse cx="912" cy="944" rx="10" ry="8" fill={G4} />
      <path d="M118 862 265 1395M150 850 290 1400M33 770 98 862 245 1425" stroke="#008511" strokeWidth="4" fill="none" />
      <path d="M940 715 965 722M940 732 965 740M940 752 965 760M1222 835 1246 842M1220 856 1246 864M1480 945 1507 950M1478 970 1507 976M840 575 975 610M1140 690 1270 730" stroke="#00c91c" strokeWidth="5" fill="none" />
      <path d="M575 640V675M590 640V680M615 625 690 660M160 775 215 810" stroke={G3} strokeWidth="7" />
    </g>
    <g fontFamily="Lato, sans-serif" fill="#4a4b4a">
      <text x="616" y="673.5" fontSize="15" fontWeight="700" textLength="77" lengthAdjust="spacingAndGlyphs">Powered by</text>
      <path d="M575 688 587 699 599 688V707H594V697L587 709 580 697V707H575Z" />
      <path d="M581 690 587 707 594 690 587 697Z" fill="#9a9a9a" />
      <text x="600" y="707" fontSize="27" textLength="97" lengthAdjust="spacingAndGlyphs">ODELO</text>
    </g>
  </svg>
);

/* ---------- tile pictures ---------- */

const Picture = ({ box, color, children }) => (
  <svg viewBox={box} preserveAspectRatio="none">
    <rect x="0" y="0" width="1600" height="1600" fill={color} />
    {children}
  </svg>
);

const ThermoPic = () => (
  <Picture box="53 53 629 585" color="#f00">
    <path d="M271 140A97 86 0 0 1 464 140V165H515A22 22 0 0 1 515 210H464V255H515A22 22 0 0 1 515 300H464V356A165 153 0 1 1 271 356Z" />
    <path d="M319 140C319 112 342 97 368 97S416 112 416 140V165H368V370C368 385 365 392 355 398C320 415 285 440 271 484C267 493 250 493 247 484C247 440 268 410 290 394C310 381 319 381 319 365Z" fill="#fff" />
  </Picture>
);

const CarbonPic = () => (
  <Picture box="857 53 629 585" color="#29ca49">
    <path d="M1103 176C1130 130 1210 125 1242 176C1300 170 1345 200 1358 252C1405 275 1440 315 1441 365C1441 410 1415 445 1371 467C1370 530 1300 570 1218 530C1190 532 1160 528 1135 514C1090 532 1035 520 1005 482C940 465 900 420 901 360C903 305 940 265 996 250C1005 195 1050 170 1103 176Z" stroke="#b8e8bf" strokeWidth="2" />
    <path d="M1134 243C1135 205 1153 188 1171 188C1190 188 1203 205 1210 236C1262 208 1312 230 1313 290C1355 294 1389 325 1389 364C1388 400 1360 428 1318 436C1328 475 1308 500 1280 501C1255 501 1243 490 1231 474C1195 493 1160 485 1141 444C1115 490 1050 485 1041 437C985 435 953 400 953 362C955 325 990 290 1052 291C1030 235 1075 205 1134 243Z" fill="#fff" />
    <g fontFamily="Lato, sans-serif" fontWeight="900" stroke="#000">
      <text x="1024" y="409" fontSize="158" strokeWidth="9" textLength="236" lengthAdjust="spacingAndGlyphs">CO</text>
      <text x="1263" y="428" fontSize="90" strokeWidth="7" textLength="61" lengthAdjust="spacingAndGlyphs">2</text>
    </g>
  </Picture>
);

const HumidityPic = () => (
  <Picture box="71 53 629 585" color="#006aff">
    <path d="M457 573A290 268 0 1 1 649 349L594 288A236 219 0 1 0 452 520C451 540 453 555 457 573Z" />
    <path d="M226 419A170 160 0 1 1 492 419" fill="none" stroke="#000" strokeWidth="28" strokeLinecap="round" />
    <path d="M512 180 400 325A41 38 0 1 1 357 284Z" />
    <path d="M495 220 512 180 470 204 497 206Z" />
    <path d="M595 345C630 398 700 475 700 537A105 101 0 0 1 490 537C490 480 555 405 595 345Z" />
  </Picture>
);

const PowerPic = () => (
  <Picture box="874 53 629 585" color="#c6732a">
    <path d="M971 211V170Q973 142 1000 142H1088Q1114 144 1117 170V211ZM1261 211V170Q1263 142 1290 142H1378Q1404 144 1407 170V211Z" />
    <rect x="874" y="233" width="629" height="405" rx="50" ry="46" />
    <path d="M947 413H1093V458H947ZM1334 367H1383V413H1431V458H1383V503H1334V458H1285V413H1334Z" fill="#fff" />
  </Picture>
);

const LOBE = [
  'M280 962C288 985 283 1005 295 1015C310 1022 335 1017 352 1015M320 980C335 975 345 985 368 980',
  'M245 993C262 1012 280 1040 272 1055C262 1068 235 1058 210 1056M217 1030C230 1035 240 1040 246 1038',
  'M258 968C264 1000 285 1020 282 1037C300 1048 325 1046 345 1044C355 1046 368 1040 368 1038',
  'M368 1080C350 1078 340 1080 328 1078M330 1108C315 1100 290 1100 287 1075C290 1048 320 1045 345 1046',
  'M192 1095C215 1100 235 1090 258 1093M190 1136C215 1132 245 1125 265 1128C295 1130 305 1140 318 1138C335 1150 350 1148 368 1140',
  'M195 1172C215 1178 230 1175 235 1160C245 1148 262 1158 266 1175C272 1195 250 1200 232 1208',
  'M287 1158C296 1180 315 1178 368 1184M300 1207C320 1205 340 1206 368 1218',
  'M240 1250C248 1220 275 1230 292 1215C298 1207 310 1205 325 1206',
  'M368 1238C350 1238 335 1232 318 1242M290 1262C305 1268 312 1278 325 1275C340 1268 355 1272 368 1272',
];

const CpuPic = () => (
  <Picture box="53 837 629 585" color="#ff00dc">
    {[0, 1, 2, 3].map((i) => (
      <g key={i}>
        <rect x={210 + i * 92} y="837" width="39" height="585" rx="20" ry="18" />
        <rect x="53" y={983 + i * 85.7} width="629" height="36" rx="20" ry="18" />
      </g>
    ))}
    <rect x="131" y="910" width="472" height="439" rx="42" ry="39" />
    <path d="M368 950C350 944 310 945 290 960C225 985 190 1060 190 1130C195 1180 205 1220 240 1252C262 1295 320 1316 368 1308C416 1316 474 1295 496 1252C530 1220 541 1180 546 1130C546 1060 511 985 446 960C426 945 386 944 368 950Z" fill="#fff" />
    <path d="M368 940V1320" stroke="#000" strokeWidth="11" />
    <g fill="none" stroke="#000" strokeWidth="8.5" strokeLinecap="round">
      {LOBE.map((d) => <path key={d} d={d} />)}
      <g transform="translate(736 0) scale(-1 1)">{LOBE.map((d) => <path key={d} d={d} />)}</g>
    </g>
  </Picture>
);

const DiskPic = () => (
  <Picture box="857 837 629 585" color="#8f0adf">
    <rect x="944" y="877" width="455" height="505" rx="32" ry="30" fill="#fff" stroke="#000" strokeWidth="21" />
    <circle cx="997" cy="928" r="21.5" /><circle cx="1345" cy="928" r="21.5" /><circle cx="997" cy="1332" r="21.5" />
    <g fill="none" stroke="#f3f3f3" strokeWidth="3">
      <ellipse cx="1162" cy="1138" rx="116" ry="113" /><ellipse cx="1162" cy="1138" rx="92" ry="90" />
      <path d="M960 1180Q985 1150 1010 1170T1060 1150M960 1210Q985 1180 1010 1200T1060 1180M1240 1050Q1270 1010 1300 1030T1390 980M1250 1080Q1280 1040 1310 1060T1390 1010" />
    </g>
    <path d="M1302 1229A184 170 0 1 0 1186 1280" fill="none" stroke="#000" strokeWidth="22" />
    <ellipse cx="1172" cy="1109" rx="65" ry="60" fill="#fff" stroke="#000" strokeWidth="21" />
    <ellipse cx="1172" cy="1109" rx="22" ry="21" />
    <path d="M1180 1209 1314 1271C1340 1285 1340 1315 1318 1327C1303 1332 1290 1330 1278 1320L1170 1225C1162 1215 1168 1205 1180 1209Z" fill="#fff" stroke="#000" strokeWidth="21" strokeLinejoin="round" />
  </Picture>
);

const MicPic = () => (
  <Picture box="71 837 629 585" color="#20dab6">
    <rect x="271" y="856" width="228" height="407" rx="114" ry="106" fill="#fff" stroke="#000" strokeWidth="39" />
    <path d="M209 1194C209 1265 265 1326 345 1326H425C505 1326 562 1265 562 1194" fill="none" stroke="#000" strokeWidth="39" strokeLinecap="round" />
    <path d="M366 1340H405V1385H500A19 19 0 0 1 500 1422H270A19 19 0 0 1 270 1385H366Z" />
  </Picture>
);

const DoorPic = () => (
  <Picture box="874 837 629 585" color="#e1d42c">
    <path d="M991 856Q991 837 1008 837H1370Q1387 837 1387 856V1312A15 15 0 0 1 1358 1318L1202 1422V977L1358 873V864H1021V1312A15 15 0 0 1 991 1312Z" />
    <path d="M1230 1180H1248C1252 1155 1276 1158 1276 1186S1252 1217 1248 1192H1230Z" fill="#fff" />
  </Picture>
);

const FanPic = () => (
  <Picture box="54 64 613 679" color="#3debaa">
    <path d="M335 270C333 230 340 215 348 200C362 175 362 150 360 140C352 90 315 64 278 64C235 64 180 95 150 130C120 165 113 205 113 230C115 290 150 325 180 350C215 376 245 387 268 390C285 391 293 396 293 408C292 425 270 434 235 434C210 433 190 425 175 415C150 402 110 400 85 420C60 440 54 470 54 500C60 545 75 590 100 625C130 665 170 681 206 681C255 680 290 645 315 605C335 570 346 535 349 500C350 487 354 479 363 479C375 479 380 487 383 500C390 535 388 570 380 590C372 610 361 625 361 655C361 700 395 743 435 743C475 745 520 720 550 697C590 665 608 620 609 578C608 525 580 490 560 475C520 440 480 422 440 417C430 414 428 408 428 402C430 385 455 374 485 374C515 375 530 382 545 390C570 405 600 412 630 395C655 375 667 345 667 312C662 265 640 215 615 182C590 150 555 128 517 128C470 128 430 160 405 205C385 245 376 280 373 315C370 325 365 331 357 330C345 329 340 318 338 305C335 290 335 280 335 270Z" />
    <ellipse cx="361" cy="404" rx="31" ry="34" fill="#fff" />
  </Picture>
);

const BulbPic = ({ color }) => (
  <Picture box="837 64 613 679" color={color}>
    <path d="M1048 460C990 425 951 355 951 275C951 158 1037 64 1144 64S1337 158 1337 275C1337 355 1298 425 1240 460V530Q1240 573 1204 573H1085Q1048 573 1048 530Z" />
    <path d="M1086 433C1030 400 991 345 991 275C991 180 1060 105 1144 105S1297 180 1297 275C1297 345 1258 400 1202 433V531H1086Z" fill="#fff" />
    <rect x="1067" y="595" width="155" height="43" rx="20" ry="21" />
    <rect x="1067" y="659" width="155" height="43" rx="20" ry="21" />
    <path d="M1086 695H1203C1200 725 1185 743 1165 743H1123C1103 743 1088 725 1086 695Z" />
  </Picture>
);

const TILES = [
  { label: '94.1 °', pic: <ThermoPic /> },
  { label: '420 ppm', pic: <CarbonPic /> },
  { label: '44.6 %', pic: <HumidityPic /> },
  { label: '200.00 W', pic: <PowerPic /> },
  { label: '26 %', pic: <CpuPic /> },
  { label: '67 %', pic: <DiskPic /> },
  { label: 'Listening...', pic: <MicPic /> },
  { label: '0', pic: <DoorPic /> },
  { label: '1', pic: <FanPic /> },
  { label: '0', pic: <BulbPic color="#f00" /> },
  { label: '0', pic: <BulbPic color="#29ca49" /> },
  { label: '1', pic: <BulbPic color="#006aff" /> },
];

/* ---------- telemetry chart ---------- */

const PLOT = { left: 84, right: 2293.5, dataRight: 2224.5, top: 13, bottom: 1419.5, height: 1430.5 };
const COUNT = 33;
const series = (fn) => Array.from({ length: COUNT }, (_, i) => fn(i));
const flat = (v) => series(() => v);

/* front-most series first */
const SERIES = [
  { c: '255,0,0', v: series((i) => (i === 10 || i === 11 || (i >= 14 && i <= 17) || i >= 24 ? 94.1 : 93.96)) },
  { c: '0,106,255', v: series((i) => (i < 2 ? 44.5 : 44.65)) },
  { c: '41,202,73', v: flat(12.25) },
  { c: '198,115,42', v: flat(0.05) },
  { c: '255,0,220', v: flat(26) },
  { c: '143,10,223', v: flat(67) },
  { c: '225,212,44', v: series((i) => (i >= 23 ? 40 : 0)) },
  { c: '61,235,170', v: flat(30) },
  { c: '255,0,0', v: series((i) => (i >= 7 && i <= 20 ? 20 : 0)) },
  { c: '41,202,73', v: flat(0) },
  { c: '0,106,255', v: series((i) => (i >= 9 ? 20 : 0)) },
];

const xAt = (i) => PLOT.left + ((PLOT.dataRight - PLOT.left) * i) / (COUNT - 1);
const yAt = (v) => PLOT.bottom - ((PLOT.bottom - PLOT.top) * v) / 100;

const curve = (values) => {
  const pts = values.map((v, i) => [xAt(i), yAt(v)]);
  const controls = pts.map((p, i) => {
    const a = pts[Math.max(i - 1, 0)];
    const b = pts[Math.min(i + 1, pts.length - 1)];
    const d1 = Math.hypot(p[0] - a[0], p[1] - a[1]);
    const d2 = Math.hypot(b[0] - p[0], b[1] - p[1]);
    const f1 = (0.1 * d1) / (d1 + d2);
    const f2 = (0.1 * d2) / (d1 + d2);
    return {
      inn: [p[0] - f1 * (b[0] - a[0]), p[1] - f1 * (b[1] - a[1])],
      out: [p[0] + f2 * (b[0] - a[0]), p[1] + f2 * (b[1] - a[1])],
    };
  });
  return pts.slice(1).reduce(
    (d, p, i) => `${d}C${controls[i].out.join(' ')} ${controls[i + 1].inn.join(' ')} ${p.join(' ')}`,
    `M${pts[0].join(' ')}`,
  );
};

const Chart = () => (
  <svg width="2389" height="1430.5" viewBox="0 0 2389 1430.5">
    <g stroke="rgba(0,0,0,.1)" strokeWidth="2.1">
      <path d={`M${PLOT.left} 0V${PLOT.height}M${PLOT.right} 0V${PLOT.height}`} />
      {Array.from({ length: 11 }, (_, i) => (
        <path key={i} d={`M62 ${yAt(i * 10)}H${PLOT.right}`} />
      ))}
      {Array.from({ length: 10 }, (_, i) => (
        <path key={i} d={`M${PLOT.left} ${yAt((i * 100) / 9)}H2313`} />
      ))}
      <path d={`M62 ${yAt(0)}H${PLOT.right}`} stroke="rgba(0,0,0,.2)" />
    </g>
    {[...SERIES].reverse().map((s, k) => {
      const d = curve(s.v);
      return (
        <g key={k}>
          <path d={`${d}V${PLOT.bottom}H${PLOT.left}Z`} fill={`rgba(${s.c},.1)`} />
          <path d={d} fill="none" stroke={`rgb(${s.c})`} strokeWidth="6.2" strokeLinejoin="round" />
          {s.v.map((v, i) => (
            <circle key={i} cx={xAt(i)} cy={yAt(v)} r="2.1" fill="#fff" stroke={`rgb(${s.c})`} strokeWidth="2.1" />
          ))}
        </g>
      );
    })}
    <g fill="#666" fontSize="25.3" fontFamily="Liberation Sans, Arial, sans-serif">
      {Array.from({ length: 11 }, (_, i) => (
        <text key={i} x="62" y={yAt(i * 10) + 8.3} textAnchor="end">{i * 10}</text>
      ))}
      {Array.from({ length: 10 }, (_, i) => (
        <text key={i} x="2313" y={yAt((i * 100) / 9) + 8.3}>{200 + i * 200}</text>
      ))}
    </g>
  </svg>
);

/* ---------- page ---------- */

const Title = ({ glyph, children }) => (
  <Heading><Glyph name={glyph} size={37.5} />{children}</Heading>
);

const Nav = ({ glyph, children }) => (
  <NavItem><Glyph name={glyph} size={29.5} />{children}</NavItem>
);

export default function App() {
  return (
    <Page>
      <GlobalStyle />
      <Navbar>
        <NavGroup>
          <Brand><Glyph name="home" size={40} />EVE</Brand>
          <Nav glyph="dashboard">Dashboard</Nav>
          <Nav glyph="transfer">Control System</Nav>
          <Nav glyph="stats">Data Telemetry</Nav>
          <Nav glyph="film">Gallery</Nav>
        </NavGroup>
        <NavGroup>
          <Nav glyph="save">Download</Nav>
          <Nav glyph="refresh">Reload</Nav>
          <Nav glyph="user">Davy Ragland</Nav>
        </NavGroup>
      </Navbar>
      <Body>
        <Panel $height={676}>
          <Container>
            <Title glyph="dashboard">Dashboard</Title>
            <Wells>
              <Well $width={551.5}><MapWidget /></Well>
              <Well $width={755}><CalendarWidget /></Well>
              <Well $width={958.5}><WeatherWidget /></Well>
            </Wells>
          </Container>
        </Panel>
        <Panel $height={1446}>
          <Container>
            <Title glyph="transfer">Control System</Title>
            <Tiles>
              <CameraTile>
                <RoomView />
                <Readout>2016-09-16 14:18:06</Readout>
              </CameraTile>
              {TILES.map((t, i) => (
                <Tile key={i}>
                  <Thumb>{t.pic}</Thumb>
                  <Readout>{t.label}</Readout>
                </Tile>
              ))}
            </Tiles>
          </Container>
        </Panel>
        <Panel $height={1775}>
          <Container>
            <Title glyph="stats">Data Telemetry</Title>
            <ChartFrame><Chart /></ChartFrame>
            <PlotBar>
              <PlotKey $radius="12px 0 0 12px">1</PlotKey>
              <PlotSelect>
                minutes
                <svg width="12" height="13" viewBox="0 0 12 13"><path d="M0 0H12L6 13Z" fill="#fff" /></svg>
              </PlotSelect>
              <PlotKey $radius="0 12px 12px 0">Plot</PlotKey>
            </PlotBar>
          </Container>
        </Panel>
        <Footer>
          <FooterButton><Glyph name="envelope" size={29.5} />dragland@stanford.edu</FooterButton>
          <FooterButton>Made with <Glyph name="heart" size={28} /> at Stanford, CA</FooterButton>
        </Footer>
      </Body>
    </Page>
  );
}
